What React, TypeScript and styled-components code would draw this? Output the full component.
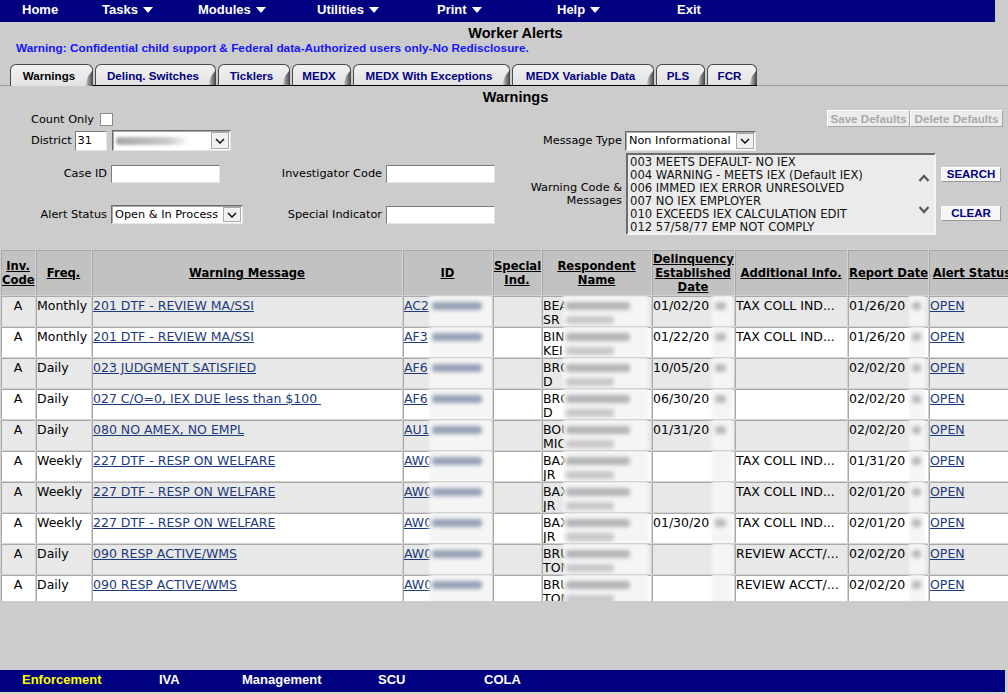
import React from "react";
import styled, { createGlobalStyle } from "styled-components";

const NAVY = "#000080";
const BODY_FONT = `"DejaVu Sans", Verdana, sans-serif`;
const UI_FONT = `"Liberation Sans", Arial, sans-serif`;
const LINK = "#1c3a7e";

const GlobalStyle = createGlobalStyle`
  html, body { margin: 0; padding: 0; background: #cccccc; overflow: hidden; }
  body { font-family: ${BODY_FONT}; color: #000; }
  *, *::before, *::after { box-sizing: border-box; }
`;

const Page = styled.div`
  width: 1008px;
  height: 694px;
  display: flex;
  flex-direction: column;
  overflow: hidden;
`;

const MenuBar = styled.nav<{ $w: number }>`
  width: ${(p) => p.$w}px;
  height: 22px;
  flex-shrink: 0;
  background: ${NAVY};
  display: flex;
  align-items: center;
  padding: 0 0 2px 22px;
`;

const MenuItem = styled.span<{ $w?: number; $accent?: boolean }>`
  width: ${(p) => (p.$w ? `${p.$w}px` : "auto")};
  flex-shrink: 0;
  display: inline-flex;
  align-items: center;
  gap: 5px;
  white-space: nowrap;
  color: ${(p) => (p.$accent ? "#ffff00" : "#ffffff")};
  font: bold 13px/18px ${UI_FONT};
`;

const Caret = () => (
  <svg width="10" height="6" viewBox="0 0 10 6" aria-hidden>
    <polygon points="0,0 10,0 5,6" fill="#fff" />
  </svg>
);

const Title = styled.h1`
  margin: 0;
  padding-top: 2px;
  width: 1031px;
  text-align: center;
  font: bold 14.5px/18px ${UI_FONT};
`;

const Notice = styled.div`
  padding-left: 16px;
  color: #1414ff;
  font: bold 11.8px/13px ${UI_FONT};
  white-space: nowrap;
`;

const TabBar = styled.div`
  margin-top: 9px;
  height: 22px;
  flex-shrink: 0;
  padding-left: 10px;
  display: flex;
  align-items: flex-end;
  border-bottom: 1px solid #9c9c9c;
`;

const TabGroup = styled.div`
  display: flex;
  align-items: flex-end;
  gap: 2px;
  padding-left: 2px;
  height: 22px;
  margin-bottom: -1px;
  border-bottom: 1px solid #000;
`;

const Tab = styled.div<{ $w: number; $active?: boolean }>`
  position: relative;
  width: ${(p) => p.$w}px;
  height: ${(p) => (p.$active ? 22 : 21)}px;
  margin-bottom: ${(p) => (p.$active ? -1 : 0)}px;
  display: flex;
  align-items: center;
  justify-content: center;
  padding: 1px 5px 0 0;
  border: 1px solid #4a4a4a;
  border-bottom: 0;
  border-radius: 6px 6px 0 0;
  background: linear-gradient(#f2f2f2, #e2e2e2);
  color: ${(p) => (p.$active ? "#000" : NAVY)};
  font: bold 11.6px/14px ${UI_FONT};
  white-space: nowrap;
  &::after {
    content: "";
    position: absolute;
    right: 0;
    top: 6px;
    bottom: 0;
    width: 7px;
    background: linear-gradient(90deg, rgba(150, 150, 150, 0) 0%, #8c8c8c 55%, #555 100%);
    clip-path: polygon(100% 0, 100% 100%, 0 100%, 45% 35%);
  }
`;

const SectionHeading = styled.h2`
  margin: 2px 0 0;
  width: 1031px;
  text-align: center;
  font: bold 14.5px/18px ${UI_FONT};
`;

const FormArea = styled.div`
  width: 1008px;
  height: 130px;
  flex-shrink: 0;
  display: flex;
`;

const LeftForm = styled.div`
  width: 500px;
  display: flex;
  flex-direction: column;
`;

const FieldText = styled.span`
  font-size: 11.3px;
  line-height: 13px;
  white-space: nowrap;
`;

const CheckRow = styled.label`
  margin-top: 5px;
  height: 17px;
  padding-left: 31px;
  display: flex;
  align-items: center;
  gap: 6px;
`;

const CheckBox = styled.span`
  width: 13px;
  height: 13px;
  background: #fff;
  border: 1px solid #8a8a8a;
`;

const DistrictRow = styled.div`
  margin-top: 2px;
  height: 21px;
  padding-left: 31px;
  display: flex;
  align-items: center;
`;

const TextInput = styled.span<{ $w: number; $h: number; $gap?: number }>`
  display: flex;
  align-items: center;
  width: ${(p) => p.$w}px;
  height: ${(p) => p.$h}px;
  margin-left: ${(p) => p.$gap ?? 0}px;
  padding: 0 2px;
  background: #fff;
  border: 1px solid;
  border-color: #7c7c7c #e6e6e6 #e6e6e6 #7c7c7c;
  font-size: 11.3px;
`;

const SelectBox = styled.span<{ $w: number; $h: number; $gap?: number }>`
  display: flex;
  align-items: stretch;
  width: ${(p) => p.$w}px;
  height: ${(p) => p.$h}px;
  margin-left: ${(p) => p.$gap ?? 0}px;
  background: #fff;
  border: 1px solid;
  border-color: #6a6a6a #e8e8e8 #e8e8e8 #6a6a6a;
  box-shadow: inset 1px 1px 0 #a8a8a8;
`;

const SelectValue = styled.span`
  flex: 1;
  min-width: 0;
  display: flex;
  align-items: center;
  padding: 0 3px;
  overflow: hidden;
  white-space: nowrap;
  font-size: 11.3px;
`;

const SelectArrow = styled.span`
  width: 18px;
  margin: 1px;
  display: flex;
  align-items: center;
  justify-content: center;
  background: #f0f0f0;
  border: 1px solid #a8a8a8;
`;

const Chevron = () => (
  <svg width="10" height="6" viewBox="0 0 10 6" aria-hidden>
    <polyline points="1,1 5,5 9,1" fill="none" stroke="#111" strokeWidth="1.5" />
  </svg>
);

const BlurBar = styled.span<{ $w: number }>`
  display: block;
  width: ${(p) => p.$w}px;
  height: 8px;
  border-radius: 3px;
  background: linear-gradient(90deg, #a9a9a9, #c9c9c9 70%, rgba(255, 255, 255, 0));
  filter: blur(1.5px);
`;

const FieldGrid = styled.div`
  margin-top: 13px;
  display: grid;
  grid-template-columns: 107px 132px 135px 109px;
  grid-auto-rows: 19px;
  column-gap: 4px;
  row-gap: 22px;
  align-items: center;
`;

const RightLabel = styled(FieldText)`
  justify-self: end;
  text-align: right;
`;

const RightForm = styled.div`
  margin-left: auto;
  margin-right: 5px;
  width: 483px;
  display: flex;
  flex-direction: column;
`;

const ButtonRow = styled.div`
  margin-top: 4px;
  height: 17px;
  display: flex;
  justify-content: flex-end;
`;

const GhostButton = styled.span<{ $w: number }>`
  width: ${(p) => p.$w}px;
  height: 17px;
  display: flex;
  align-items: center;
  justify-content: center;
  background: #ececec;
  border: 1px solid;
  border-color: #ffffff #a6a6a6 #a6a6a6 #ffffff;
  color: #a9a9a9;
  font: bold 11.6px/14px ${UI_FONT};
  white-space: nowrap;
`;

const MessageRow = styled.div`
  margin-top: 3px;
  height: 21px;
  display: grid;
  grid-template-columns: 102px 131px;
  column-gap: 3px;
  align-items: center;
`;

const ListRow = styled.div`
  margin-top: 2px;
  display: grid;
  grid-template-columns: 102px 310px 60px;
  column-gap: 4px;
`;

const ListLabel = styled(RightLabel)`
  align-self: center;
`;

const ListBox = styled.div`
  height: 82px;
  display: flex;
  background: #ebebeb;
  border: 2px solid;
  border-color: #6c6c6c #f4f4f4 #f4f4f4 #6c6c6c;
`;

const Options = styled.div`
  flex: 1;
  padding: 1px 0 0 2px;
  font-size: 11.6px;
  line-height: 13px;
  color: #111;
  white-space: nowrap;
  overflow: hidden;
`;

const ScrollCol = styled.div`
  width: 20px;
  display: flex;
  flex-direction: column;
  align-items: center;
  justify-content: center;
  gap: 24px;
`;

const ScrollChevron = ({ up }: { up?: boolean }) => (
  <svg width="12" height="8" viewBox="0 0 12 8" aria-hidden>
    <polyline
      points={up ? "1.5,7 6,2 10.5,7" : "1.5,1 6,6 10.5,1"}
      fill="none"
      stroke="#5a5a5a"
      strokeWidth="2.2"
    />
  </svg>
);

const ActionCol = styled.div`
  margin-left: 1px;
  padding-top: 14px;
  display: flex;
  flex-direction: column;
  gap: 24px;
`;

const ActionButton = styled.span`
  width: 60px;
  height: 15px;
  display: flex;
  align-items: center;
  justify-content: center;
  background: #f6f6f6;
  border: 1px solid;
  border-color: #ffffff #9a9a9a #9a9a9a #ffffff;
  color: ${NAVY};
  font: bold 11.5px/13px ${UI_FONT};
`;

const TableWrap = styled.div`
  margin-top: 13px;
  height: 352px;
  flex-shrink: 0;
  overflow: hidden;
`;

const Grid = styled.table`
  width: 1016px;
  table-layout: fixed;
  border-collapse: separate;
  border-spacing: 1px;
  background: #d2d2d2;
`;

const Th = styled.th<{ $nowrap?: boolean }>`
  height: 45px;
  padding: 1px 1px 0;
  background: #c2c2c2;
  box-shadow: inset 1px 1px 0 #a6a6a6;
  vertical-align: middle;
  text-align: center;
  font: bold 11.6px/14px ${BODY_FONT};
  text-decoration: underline;
  white-space: ${(p) => (p.$nowrap ? "nowrap" : "normal")};
  overflow: hidden;
`;

const Tr = styled.tr<{ $alt: boolean }>`
  background: ${(p) => (p.$alt ? "#e8e8e8" : "#ffffff")};
`;

const Td = styled.td<{ $center?: boolean }>`
  position: relative;
  height: 30px;
  padding: 0 1px;
  box-shadow: inset 1px 1px 0 #a9a9a9;
  vertical-align: top;
  text-align: ${(p) => (p.$center ? "center" : "left")};
  font-size: 12.5px;
  line-height: 14px;
  white-space: nowrap;
  overflow: hidden;
`;

const CellBody = styled.div`
  height: 29px;
  padding-top: 3px;
`;

const Link = styled.a`
  color: ${LINK};
  text-decoration: underline;
  cursor: pointer;
`;

const Redact = styled.span<{ $l: number; $r: number }>`
  position: absolute;
  top: -1px;
  bottom: -1px;
  left: ${(p) => p.$l}px;
  right: ${(p) => p.$r}px;
  display: flex;
  flex-direction: column;
  gap: 6px;
  padding: 7px 2px 0 3px;
  background: #f5f5f5;
  filter: blur(1.6px);
`;

const Smudge = styled.span<{ $w: number; $c: string }>`
  display: block;
  width: ${(p) => p.$w}%;
  height: 8px;
  border-radius: 3px;
  background: ${(p) => p.$c};
  filter: blur(1.5px);
`;

const Spacer = styled.div`
  flex: 1;
`;

const BottomStrip = styled.div`
  height: 2px;
  flex-shrink: 0;
  background: #d6d3ce;
`;

type Row = {
  freq: string;
  msg: string;
  id: string;
  name: [string, string];
  delq?: string;
  info?: string;
  rep: string;
};

const rows: Row[] = [
  { freq: "Monthly", msg: "201 DTF - REVIEW MA/SSI", id: "AC2", name: ["BEA", "SR"], delq: "01/02/20", info: "TAX COLL IND...", rep: "01/26/20" },
  { freq: "Monthly", msg: "201 DTF - REVIEW MA/SSI", id: "AF3", name: ["BIN", "KEI"], delq: "01/22/20", info: "TAX COLL IND...", rep: "01/26/20" },
  { freq: "Daily", msg: "023 JUDGMENT SATISFIED", id: "AF6", name: ["BRO", "D"], delq: "10/05/20", rep: "02/02/20" },
  { freq: "Daily", msg: "027 C/O=0, IEX DUE less than $100\u00a0", id: "AF6", name: ["BRO", "D"], delq: "06/30/20", rep: "02/02/20" },
  { freq: "Daily", msg: "080 NO AMEX, NO EMPL", id: "AU1", name: ["BOU", "MIC"], delq: "01/31/20", rep: "02/02/20" },
  { freq: "Weekly", msg: "227 DTF - RESP ON WELFARE", id: "AW0", name: ["BAX", "JR"], info: "TAX COLL IND...", rep: "01/31/20" },
  { freq: "Weekly", msg: "227 DTF - RESP ON WELFARE", id: "AW0", name: ["BAX", "JR"], info: "TAX COLL IND...", rep: "02/01/20" },
  { freq: "Weekly", msg: "227 DTF - RESP ON WELFARE", id: "AW0", name: ["BAX", "JR"], delq: "01/30/20", info: "TAX COLL IND...", rep: "02/01/20" },
  { freq: "Daily", msg: "090 RESP ACTIVE/WMS", id: "AW0", name: ["BRU", "TOM"], info: "REVIEW ACCT/...", rep: "02/02/20" },
  { freq: "Daily", msg: "090 RESP ACTIVE/WMS", id: "AW0", name: ["BRU", "TOM"], info: "REVIEW ACCT/...", rep: "02/02/20" },
];

const colWidths = [34, 55, 310, 89, 48, 109, 82, 112, 80, 86];

const warningOptions = [
  "003 MEETS DEFAULT- NO IEX",
  "004 WARNING - MEETS IEX (Default IEX)",
  "006 IMMED IEX ERROR UNRESOLVED",
  "007 NO IEX EMPLOYER",
  "010 EXCEEDS IEX CALCULATION EDIT",
  "012 57/58/77 EMP NOT COMPLY",
];

const tabs = [
  { label: "Delinq. Switches", w: 121 },
  { label: "Ticklers", w: 72 },
  { label: "MEDX", w: 59 },
  { label: "MEDX With Exceptions", w: 157 },
  { label: "MEDX Variable Data", w: 142 },
  { label: "PLS", w: 49 },
  { label: "FCR", w: 50 },
];

export default function App() {
  return (
    <Page>
      <GlobalStyle />
      <MenuBar $w={995}>
        <MenuItem $w={80}>Home</MenuItem>
        <MenuItem $w={96}>Tasks <Caret /></MenuItem>
        <MenuItem $w={119}>Modules <Caret /></MenuItem>
        <MenuItem $w={120}>Utilities <Caret /></MenuItem>
        <MenuItem $w={120}>Print <Caret /></MenuItem>
        <MenuItem $w={120}>Help <Caret /></MenuItem>
        <MenuItem>Exit</MenuItem>
      </MenuBar>

      <Title>Worker Alerts</Title>
      <Notice>
        Warning: Confidential child support &amp; Federal data-Authorized users only-No Redisclosure.
      </Notice>

      <TabBar>
        <Tab $w={83} $active>Warnings</Tab>
        <TabGroup>
          {tabs.map((t) => (
            <Tab key={t.label} $w={t.w}>
              {t.label}
            </Tab>
          ))}
        </TabGroup>
      </TabBar>

      <SectionHeading>Warnings</SectionHeading>

      <FormArea>
        <LeftForm>
          <CheckRow>
            <FieldText>Count Only</FieldText>
            <CheckBox />
          </CheckRow>
          <DistrictRow>
            <FieldText>District</FieldText>
            <TextInput $w={32} $h={20} $gap={3}>31</TextInput>
            <SelectBox $w={119} $h={21} $gap={5}>
              <SelectValue>
                <BlurBar $w={74} />
              </SelectValue>
              <SelectArrow>
                <Chevron />
              </SelectArrow>
            </SelectBox>
          </DistrictRow>
          <FieldGrid>
            <RightLabel>Case ID</RightLabel>
            <TextInput $w={109} $h={18} />
            <RightLabel>Investigator Code</RightLabel>
            <TextInput $w={109} $h={18} />
            <RightLabel>Alert Status</RightLabel>
            <SelectBox $w={132} $h={19}>
              <SelectValue>Open &amp; In Process</SelectValue>
              <SelectArrow>
                <Chevron />
              </SelectArrow>
            </SelectBox>
            <RightLabel>Special Indicator</RightLabel>
            <TextInput $w={109} $h={18} />
          </FieldGrid>
        </LeftForm>

        <RightForm>
          <ButtonRow>
            <GhostButton $w={83}>Save Defaults</GhostButton>
            <GhostButton $w={93}>Delete Defaults</GhostButton>
          </ButtonRow>
          <MessageRow>
            <RightLabel>Message Type</RightLabel>
            <SelectBox $w={131} $h={20}>
              <SelectValue>Non Informational</SelectValue>
              <SelectArrow>
                <Chevron />
              </SelectArrow>
            </SelectBox>
          </MessageRow>
          <ListRow>
            <ListLabel>
              Warning Code &amp;
              <br />
              Messages
            </ListLabel>
            <ListBox>
              <Options>
                {warningOptions.map((o) => (
                  <div key={o}>{o}</div>
                ))}
              </Options>
              <ScrollCol>
                <ScrollChevron up />
                <ScrollChevron />
              </ScrollCol>
            </ListBox>
            <ActionCol>
              <ActionButton>SEARCH</ActionButton>
              <ActionButton>CLEAR</ActionButton>
            </ActionCol>
          </ListRow>
        </RightForm>
      </FormArea>

      <TableWrap>
        <Grid>
          <colgroup>
            {colWidths.map((w, i) => (
              <col key={i} style={{ width: w }} />
            ))}
          </colgroup>
          <thead>
            <tr>
              <Th>Inv. Code</Th>
              <Th>Freq.</Th>
              <Th>Warning Message</Th>
              <Th>ID</Th>
              <Th>Special Ind.</Th>
              <Th>Respondent Name</Th>
              <Th>Delinquency Established Date</Th>
              <Th $nowrap>Additional Info.</Th>
              <Th $nowrap>Report Date</Th>
              <Th $nowrap>Alert Status</Th>
            </tr>
          </thead>
          <tbody>
            {rows.map((r, i) => (
              <Tr key={i} $alt={i % 2 === 0}>
                <Td $center>
                  <CellBody>A</CellBody>
                </Td>
                <Td>
                  <CellBody>{r.freq}</CellBody>
                </Td>
                <Td>
                  <CellBody>
                    <Link>{r.msg}</Link>
                  </CellBody>
                </Td>
                <Td>
                  <CellBody>
                    <Link>{r.id}</Link>
                  </CellBody>
                  <Redact $l={26} $r={0}>
                    <Smudge $w={86} $c="#97a1b6" />
                  </Redact>
                </Td>
                <Td />
                <Td>
                  <CellBody>
                    {r.name[0]}
                    <br />
                    {r.name[1]}
                  </CellBody>
                  <Redact $l={21} $r={3}>
                    <Smudge $w={80} $c="#b4b4b4" />
                    <Smudge $w={60} $c="#c8c8c8" />
                  </Redact>
                </Td>
                <Td>
                  <CellBody>{r.delq ?? ""}</CellBody>
                  <Redact $l={60} $r={1}>
                    {r.delq ? <Smudge $w={70} $c="#b9b9b9" /> : null}
                  </Redact>
                </Td>
                <Td>
                  <CellBody>{r.info ?? ""}</CellBody>
                </Td>
                <Td>
                  <CellBody>{r.rep}</CellBody>
                  <Redact $l={61} $r={3}>
                    <Smudge $w={80} $c="#b9b9b9" />
                  </Redact>
                </Td>
                <Td>
                  <CellBody>
                    <Link>OPEN</Link>
                  </CellBody>
                </Td>
              </Tr>
            ))}
          </tbody>
        </Grid>
      </TableWrap>

      <Spacer />

      <MenuBar $w={1005}>
        <MenuItem $w={137} $accent>Enforcement</MenuItem>
        <MenuItem $w={83}>IVA</MenuItem>
        <MenuItem $w={136}>Management</MenuItem>
        <MenuItem $w={106}>SCU</MenuItem>
        <MenuItem>COLA</MenuItem>
      </MenuBar>
      <BottomStrip />
    </Page>
  );
}
